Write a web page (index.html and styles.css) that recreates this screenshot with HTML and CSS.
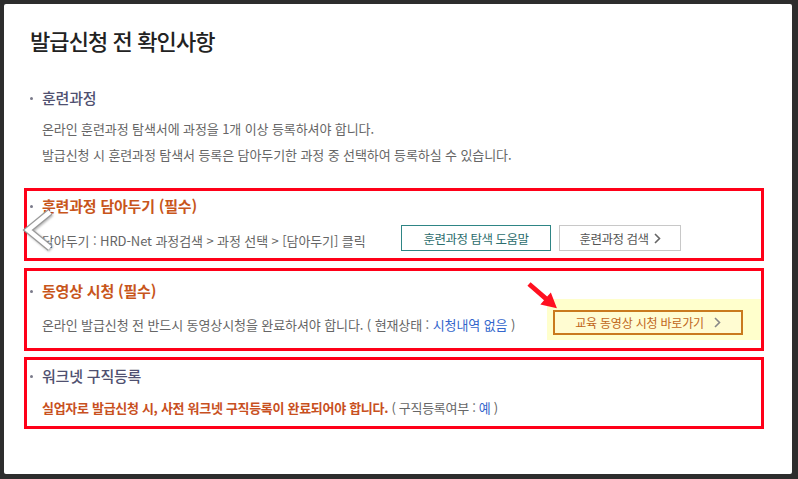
FILE: index.html
```html
<!DOCTYPE html>
<html lang="ko">
<head>
    <meta charset="UTF-8">
    <meta name="viewport" content="width=device-width, initial-scale=1.0">
    <title>발급신청 전 확인사항</title>
    <link rel="stylesheet" href="styles.css">
</head>
<body>
    <div class="modal">
        <h1 class="modal-title">발급신청 전 확인사항</h1>

        <div class="section section-first">
            <h2 class="sec-head">훈련과정</h2>
            <p class="desc">온라인 훈련과정 탐색서에 과정을 1개 이상 등록하셔야 합니다.</p>
            <p class="desc">발급신청 시 훈련과정 탐색서 등록은 담아두기한 과정 중 선택하여 등록하실 수 있습니다.</p>
        </div>

        <div class="section mark mark-1">
            <h2 class="sec-head orange">훈련과정 담아두기 (필수)</h2>
            <div class="row row-1">
                <p class="desc">담아두기 : HRD-Net 과정검색 &gt; 과정 선택 &gt; [담아두기] 클릭</p>
                <div class="btn-group">
                    <button class="btn btn-teal">훈련과정 탐색 도움말</button>
                    <button class="btn btn-gray">훈련과정 검색
                        <svg class="chev" width="7" height="11" viewBox="0 0 7 11"><polyline points="1,1 5.5,5.5 1,10" fill="none" stroke="#666" stroke-width="1.6"/></svg>
                    </button>
                </div>
            </div>
        </div>

        <div class="section mark mark-2">
            <h2 class="sec-head orange">동영상 시청 (필수)</h2>
            <div class="row row-2">
                <p class="desc">온라인 발급신청 전 반드시 동영상시청을 완료하셔야 합니다. ( 현재상태 : <span class="blue">시청내역 없음</span> )</p>
                <div class="hilite">
                    <button class="btn btn-video">교육 동영상 시청 바로가기
                        <svg class="chev" width="7" height="11" viewBox="0 0 7 11"><polyline points="1,1 5.5,5.5 1,10" fill="none" stroke="#888" stroke-width="1.6"/></svg>
                    </button>
                </div>
            </div>
            <svg class="pointer" width="34" height="30" viewBox="0 0 34 30">
                <g transform="translate(2,3) rotate(41)">
                    <polygon points="0,-2.4 22,-2.4 22,-8 37,0 22,8 22,2.4 0,2.4" fill="#ff1020"/>
                </g>
            </svg>
        </div>

        <div class="section mark mark-3">
            <h2 class="sec-head">워크넷 구직등록</h2>
            <p class="desc desc-3"><strong class="warn">실업자로 발급신청 시, 사전 워크넷 구직등록이 완료되어야 합니다.</strong> ( 구직등록여부 : <span class="blue">예</span> )</p>
        </div>

        <svg class="slide-prev" width="36" height="50" viewBox="0 0 36 50">
            <polyline points="28,6 6,24 28,42" fill="none" stroke="#9a9a9a" stroke-width="7"/>
            <polyline points="28,6 6,24 28,42" fill="none" stroke="#ffffff" stroke-width="4.5"/>
        </svg>
    </div>
</body>
</html>
```

FILE: styles.css
```css
body {
    margin: 0;
    background-color: #2d2d2d;
    font-family: "Noto Sans CJK KR", "Noto Sans", sans-serif;
    height: 479px;
    overflow: hidden;
}
.modal {
    position: relative;
    box-sizing: border-box;
    margin: 4px 0 0 4px;
    width: 788px;
    height: 470px;
    padding: 21px 0 0 20px;
    background-color: #ffffff;
    border-radius: 2px;
}
.modal-title {
    margin: 0;
    padding-left: 6px;
    font-size: 22px;
    line-height: 30px;
    font-weight: 500;
    letter-spacing: -0.9px;
    color: #222222;
}
.section {
    padding-left: 6px;
}
.section-first {
    margin-top: 33px;
}
.mark {
    box-sizing: border-box;
    position: relative;
    width: 740px;
    border: 3px solid #ff0018;
    padding-left: 3px;
}
.mark-1 {
    margin-top: 20px;
    padding-top: 5px;
    padding-bottom: 7px;
}
.mark-2 {
    margin-top: 7px;
    padding-top: 10px;
    padding-bottom: 8px;
}
.mark-3 {
    margin-top: 6px;
    padding-top: 6px;
    padding-bottom: 8px;
}
.sec-head {
    margin: 0;
    display: flex;
    align-items: center;
    font-size: 15px;
    line-height: 20px;
    font-weight: 500;
    letter-spacing: -0.2px;
    color: #4f5070;
}
.sec-head::before {
    content: "";
    width: 3px;
    height: 3px;
    margin-right: 9px;
    border-radius: 50%;
    background-color: #7a7a8a;
}
.sec-head.orange {
    color: #c8561b;
    font-weight: 700;
    letter-spacing: -0.2px;
}
.desc {
    margin: 0;
    padding-left: 12px;
    font-size: 13px;
    line-height: 26px;
    letter-spacing: -0.1px;
    color: #666666;
}
.section-first .desc:first-of-type {
    margin-top: 8px;
}
.row {
    display: grid;
    align-items: center;
}
.row-1 {
    grid-template-columns: 371px auto;
    margin-top: 9px;
}
.row-1 .desc {
    align-self: end;
    line-height: 20px;
}
.row-2 {
    grid-template-columns: 517px auto;
    margin-top: -2px;
}
.row-2 .desc {
    align-self: end;
    line-height: 20px;
    margin-bottom: 5px;
}
.btn-group {
    display: flex;
    gap: 8px;
}
.btn {
    display: flex;
    align-items: center;
    justify-content: center;
    gap: 5px;
    box-sizing: border-box;
    height: 26px;
    margin: 0;
    padding: 0;
    background-color: #ffffff;
    font-family: inherit;
    font-size: 12.5px;
    letter-spacing: -0.5px;
    cursor: pointer;
}
.btn-teal {
    width: 150px;
    border: 1px solid #2e8585;
    color: #2d6d6d;
}
.btn-gray {
    width: 122px;
    border: 1px solid #c8c8c8;
    color: #555555;
}
.hilite {
    padding: 11px 4px 5px 6px;
    background-color: #ffffcc;
}
.btn-video {
    width: 190px;
    height: 25px;
    border: 2px solid #c97a1e;
    background-color: #fffcd2;
    color: #c0661a;
    font-size: 12px;
    letter-spacing: -0.2px;
    gap: 10px;
}
.blue {
    color: #3366cc;
}
.desc-3 {
    margin-top: 12px;
    line-height: 20px;
    letter-spacing: -0.3px;
}
.warn {
    color: #c8501e;
    font-weight: 700;
}
.pointer {
    position: absolute;
    left: 500px;
    top: 10px;
}
.slide-prev {
    position: absolute;
    left: 18px;
    top: 202px;
    filter: drop-shadow(1px 1px 1px rgba(0, 0, 0, 0.3));
}
```
